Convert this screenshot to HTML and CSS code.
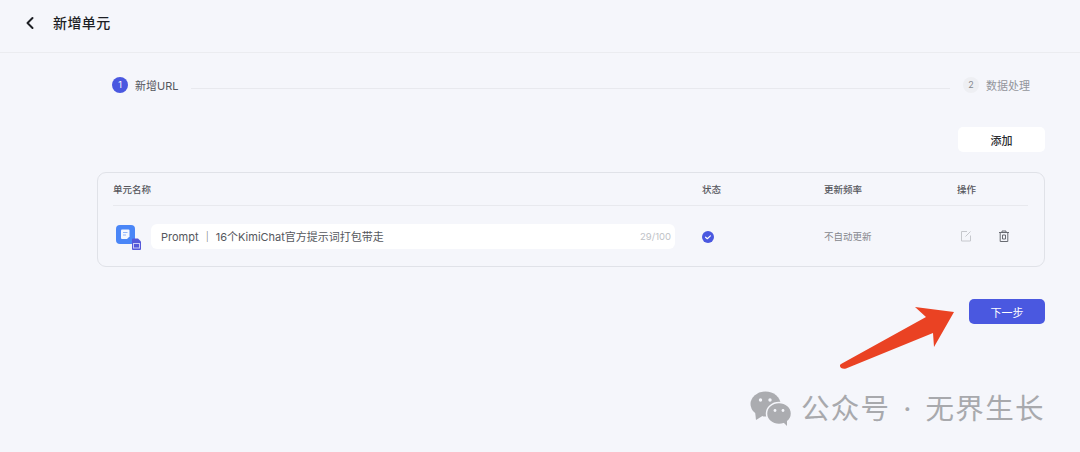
FILE: index.html
```html
<!DOCTYPE html>
<html lang="zh">
<head>
  <meta charset="UTF-8">
  <title>新增单元</title>
  <link rel="stylesheet" href="styles.css">
</head>
<body>
  <header class="topbar">
    <svg class="back-icon" width="12" height="14" viewBox="0 0 12 14"><path d="M8.5 2 L3.5 7 L8.5 12" fill="none" stroke="#1d1f24" stroke-width="2" stroke-linecap="round" stroke-linejoin="round"/></svg>
    <h1>新增单元</h1>
  </header>

  <main class="content">
    <div class="steps">
      <span class="step-num active">1</span>
      <span class="step-label">新增URL</span>
      <span class="step-line"></span>
      <span class="step-num">2</span>
      <span class="step-label muted">数据处理</span>
    </div>

    <div class="toolbar">
      <button class="btn-add">添加</button>
    </div>

    <section class="card">
      <div class="grid head">
        <span>单元名称</span>
        <span>状态</span>
        <span>更新频率</span>
        <span>操作</span>
      </div>
      <div class="grid row">
        <div class="name-cell">
          <svg class="file-icon" width="28" height="28" viewBox="0 0 28 28">
            <rect x="1" y="1" width="19" height="19" rx="4" fill="#4a86f7"/>
            <path d="M6 6.500a1 1 0 0 1 1-1h6.500a1 1 0 0 1 1 1v6l-2.500 2.500H7a1 1 0 0 1-1-1z" fill="#f4f7fe"/>
            <path d="M8 8.500h4.500M8 11h3" stroke="#8fb5fa" stroke-width="1.200"/>
            <path d="M17 15.500a1 1 0 0 1 1-1h5l3 3v7.500a1 1 0 0 1-1 1h-7a1 1 0 0 1-1-1z" fill="#5558d9"/>
            <rect x="18.500" y="19.500" width="6" height="4.500" fill="none" stroke="#c9caf5" stroke-width="1"/>
          </svg>
          <div class="name-input">
            <span class="name-text">Prompt ｜ 16个KimiChat官方提示词打包带走</span>
            <span class="count">29/100</span>
          </div>
        </div>
        <div>
          <svg class="status-icon" width="12" height="12" viewBox="0 0 12 12"><circle cx="6" cy="6" r="6" fill="#4a58e0"/><path d="M3.600 6.200 L5.300 7.700 L8.400 4.900" fill="none" stroke="#fff" stroke-width="1.200" stroke-linecap="round" stroke-linejoin="round"/></svg>
        </div>
        <div class="freq">不自动更新</div>
        <div class="ops">
          <svg width="12" height="12" viewBox="0 0 12 12"><path d="M7 1.500H1.500v9.500h9V5.500" fill="none" stroke="#c6c8cd" stroke-width="1"/><path d="M5.500 6.500 L10.500 1.500" stroke="#c6c8cd" stroke-width="1"/></svg>
          <svg width="12" height="12" viewBox="0 0 12 12"><path d="M1 2.500h10M4 2.500V1h4v1.500M2.200 2.500v9h7.600v-9M4.500 5v4h3V5z" fill="none" stroke="#686b72" stroke-width="1"/></svg>
        </div>
      </div>
    </section>

    <div class="footer-actions">
      <button class="btn-next">下一步</button>
    </div>
  </main>

  <svg class="arrow" width="120" height="76" viewBox="0 0 120 76"><path d="M2 64 L87 17 L76 7 L115 12 L95 47 L94 33 L7 68.500 C3 70 -1 66 2 64 Z" fill="#ea4223"/></svg>

  <div class="watermark">
    <svg width="42" height="36" viewBox="0 0 42 36">
      <ellipse cx="15.500" cy="13" rx="15" ry="12.500" fill="#abacb0"/>
      <path d="M5 20 L6 29 L14 24z" fill="#abacb0"/>
      <ellipse cx="29" cy="22.500" rx="12.500" ry="11" fill="#abacb0" stroke="#f5f6fb" stroke-width="1.500"/>
      <path d="M33 31 L37 35 L37 28z" fill="#abacb0"/>
      <circle cx="10.500" cy="9" r="1.700" fill="#f5f6fb"/>
      <circle cx="20" cy="9" r="1.700" fill="#f5f6fb"/>
      <circle cx="25" cy="19.500" r="1.400" fill="#f5f6fb"/>
      <circle cx="33" cy="19.500" r="1.400" fill="#f5f6fb"/>
    </svg>
    <span class="watermark-text">公众号 · 无界生长</span>
  </div>
</body>
</html>
```

FILE: styles.css
```css
* {
  box-sizing: border-box;
  margin: 0;
  padding: 0;
}
html, body {
  height: 452px;
  overflow: hidden;
}
body {
  position: relative;
  background-color: #f5f6fb;
  color: #1d1f24;
  font-family: "Inter", "Noto Sans CJK SC", sans-serif;
}
.topbar {
  display: flex;
  align-items: center;
  height: 53px;
  padding: 0 0 7px 24px;
  border-bottom: 1px solid #ebecf0;
}
.back-icon {
  margin-right: 17px;
}
.topbar h1 {
  margin-bottom: 2px;
  font-size: 14px;
  font-weight: 500;
  letter-spacing: 0.4px;
}
.content {
  padding: 0 35px 0 97px;
}
.steps {
  display: flex;
  align-items: center;
  height: 16px;
  margin: 24px 15px 0 15px;
  font-size: 11px;
}
.step-num {
  width: 16px;
  height: 16px;
  border-radius: 50%;
  background-color: #eeeff3;
  color: #85878d;
  font-size: 9px;
  line-height: 16px;
  text-align: center;
}
.step-num.active {
  background-color: #4a58e0;
  color: #fff;
}
.step-label {
  margin-left: 7px;
  color: #55575d;
}
.step-label.muted {
  color: #93959b;
}
.step-line {
  flex: 1;
  height: 1px;
  margin: 6px 13px 0;
  background-color: #e8e9ee;
}
.toolbar {
  display: flex;
  justify-content: flex-end;
  margin-top: 34px;
}
button {
  border: none;
  font-family: inherit;
  font-size: 11px;
}
.btn-add {
  width: 87px;
  height: 25px;
  border-radius: 5px;
  background-color: #fff;
  color: #2a2c31;
  font-weight: 500;
}
.card {
  height: 95px;
  margin-top: 20px;
  padding: 0 16px 0 15px;
  border: 1px solid #e0e2e8;
  border-radius: 9px;
}
.grid {
  display: grid;
  grid-template-columns: 589px 122px 133px 1fr;
  align-items: center;
}
.head {
  height: 33px;
  border-bottom: 1px solid #e8e9ee;
  font-size: 9.500px;
  font-weight: 500;
  color: #55575d;
}
.row {
  height: 60px;
}
.name-cell {
  display: flex;
  align-items: center;
  gap: 7px;
  margin-left: 2px;
  padding-right: 27px;
}
.file-icon {
  flex: none;
  margin-top: 3px;
}
.name-input {
  display: flex;
  flex: 1;
  align-items: center;
  justify-content: space-between;
  height: 25px;
  margin-left: 1px;
  padding: 0 4px 0 10px;
  border-radius: 6px;
  background-color: #fff;
}
.name-text {
  font-size: 11px;
  color: #55575d;
}
.count {
  font-size: 9.500px;
  color: #c0c2c7;
}
.status-icon {
  display: block;
  margin: 1px 0 0 0;
}
.freq {
  font-size: 9.500px;
  color: #85878d;
}
.ops {
  display: flex;
  gap: 26px;
  margin-left: 3px;
}
.footer-actions {
  display: flex;
  justify-content: flex-end;
  margin-top: 32px;
}
.btn-next {
  width: 76px;
  height: 25px;
  border-radius: 5px;
  background-color: #4a58e0;
  color: #fff;
}
.arrow {
  position: absolute;
  left: 839px;
  top: 300px;
}
.watermark {
  position: absolute;
  left: 750px;
  top: 390px;
  display: flex;
  align-items: center;
  gap: 9px;
  color: #a8a9ad;
  font-size: 28.500px;
  letter-spacing: 1.300px;
  word-spacing: 3.500px;
  line-height: 36px;
  white-space: nowrap;
}
.watermark-text {
  padding-top: 1px;
}
```
